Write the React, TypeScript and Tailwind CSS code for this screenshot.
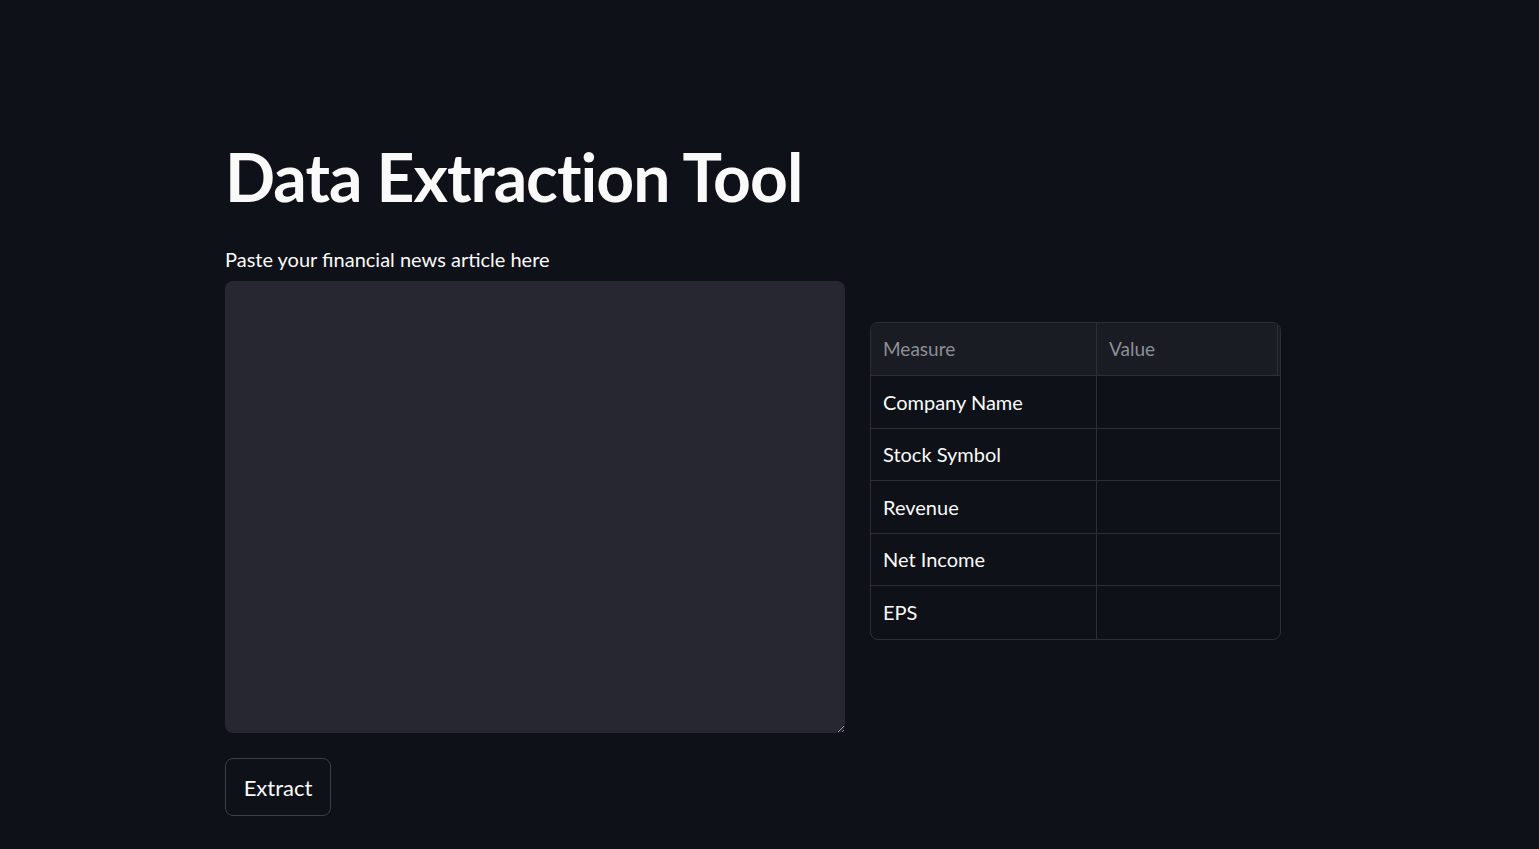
import { useState } from 'react'

const rows = ['Company Name', 'Stock Symbol', 'Revenue', 'Net Income', 'EPS']

export default function App() {
  const [article, setArticle] = useState('')

  return (
    <div className="min-h-screen w-full bg-[#0e1117] text-[#fafafa] font-['Lato',sans-serif]">
      <div className="pl-[225px] pt-[137px]">
        {/* Title */}
        <h1 className="text-[66px] font-bold leading-[80px] tracking-[-1px]">
          Data Extraction Tool
        </h1>

        <div className="mt-[29px] flex gap-[25px] items-start">
          {/* Left column */}
          <div className="w-[620px] flex flex-col">
            <label className="text-[20px] leading-[26px]">
              Paste your financial news article here
            </label>
            <textarea
              value={article}
              onChange={(e) => setArticle(e.target.value)}
              className="mt-[9px] h-[452px] w-full rounded-lg bg-[#262730] border-none outline-none p-4 text-[19px] text-[#fafafa] resize-y"
            />
            <div className="mt-[25px]">
              <button className="h-[58px] w-[106px] rounded-lg border border-[#3d3f46] bg-[#0e1117] text-[22px] text-[#fafafa]">
                Extract
              </button>
            </div>
          </div>

          {/* Right column: table */}
          <div className="mt-[76px] w-[411px] rounded-lg border border-[#2d2f35] overflow-hidden">
            <div className="grid grid-cols-[226px_1fr] h-[53px] bg-[#1a1c24] border-b border-[#2d2f35] text-[19px] text-[#8d8f95]">
              <div className="flex items-center px-3 border-r border-[#2d2f35]">Measure</div>
              <div className="flex items-center px-3 mr-[2px] border-r border-[#2d2f35]">Value</div>
            </div>
            {rows.map((r, i) => (
              <div
                key={r}
                className={`grid grid-cols-[226px_1fr] h-[52.5px] text-[20px] ${i < rows.length - 1 ? 'border-b border-[#2d2f35]' : ''}`}
              >
                <div className="flex items-center px-3 border-r border-[#2d2f35]">{r}</div>
                <div />
              </div>
            ))}
          </div>
        </div>
      </div>
    </div>
  )
}
